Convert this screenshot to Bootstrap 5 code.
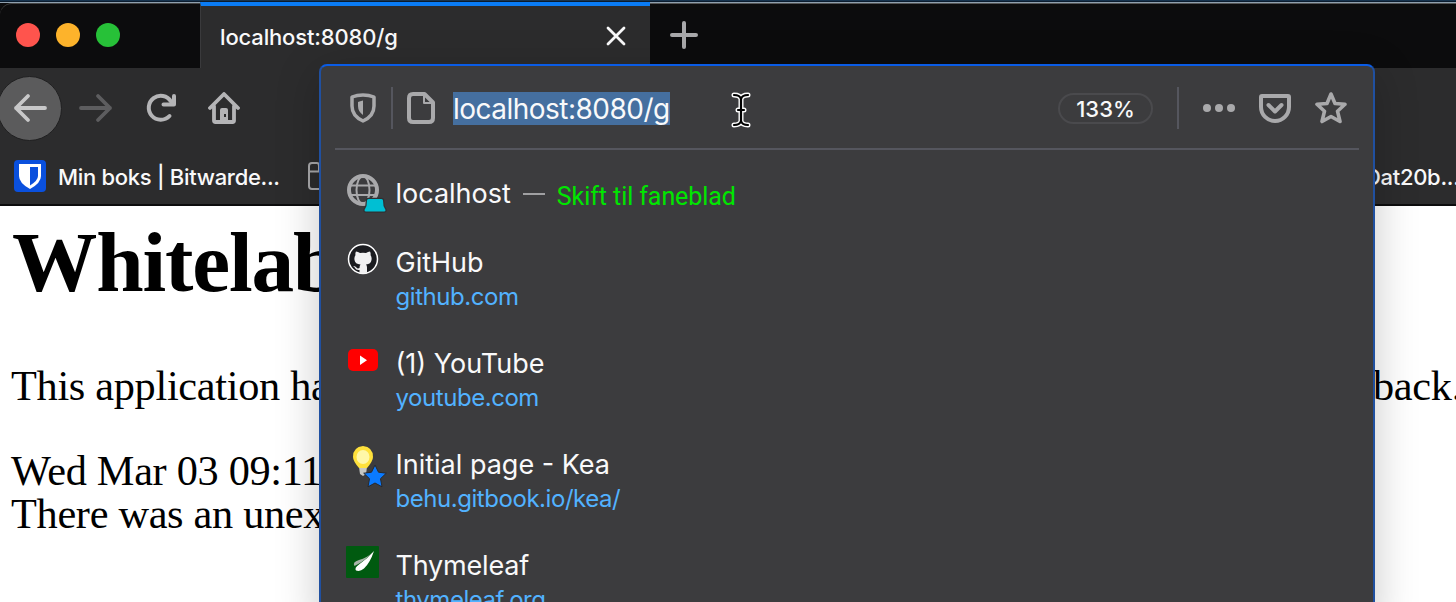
<!DOCTYPE html>
<html lang="da">
<head>
<meta charset="utf-8">
<meta name="viewport" content="width=device-width, initial-scale=1">
<title>localhost:8080/g</title>
<link href="https://cdn.jsdelivr.net/npm/bootstrap@5.3.0/dist/css/bootstrap.min.css" rel="stylesheet">
<style>
body{height:602px;font-family:Inter,"Liberation Sans",sans-serif;background:#fff;color:#f9f9fa}
svg{display:block;flex:none}
.window-edge{height:3px;background:linear-gradient(#17344f 0 1px,#0b1c2e 1px 2px,#8fa0ae 2px)}
.tabstrip{height:65px;background:#0c0c0d}
.lights{width:200px;padding-left:16px;padding-top:19px;gap:16px;border-top:1px solid #444;border-top-left-radius:12px}
.light{width:24px;height:24px;border-radius:50%}
.light.red{background:#ff544d}.light.amber{background:#fdb32b}.light.green{background:#27c138}
.tab{width:450px;margin-top:-1px;background:#2c2c2d;border-top:4px solid #0a7cf5;border-left:1px solid #3a3a3c;font-size:22px;font-weight:500;padding:0 23px 0 19px}
.tab span{letter-spacing:-.15px;line-height:62px}
.newtab{flex:1;border-top:1px solid #555;padding:17px 0 0 20px}
.toolbar{height:80px;background:#2c2c2d;gap:31px}
.backbtn{width:65px;height:65px;margin-left:-3px;border-radius:50%;background:#5b5b5c;border:1px solid #202021}
.bookmarks{height:58px;background:#2c2c2d;border-bottom:2px solid #0c0c0d;font-size:22px;font-weight:500;padding-left:14px}
.bmk{flex:none;letter-spacing:-.3px;white-space:nowrap;padding-top:2px}
.page{color:#000;font-family:"Liberation Serif",serif;font-size:42.3px;line-height:43px;padding:0 0 0 11px;white-space:nowrap;letter-spacing:-.3px}
.page h1{font-size:85.33px;line-height:96px;font-weight:700;margin:8px 0 0;letter-spacing:-1.15px;padding-left:1px}
.page p{margin:0}
.leftpart{width:1362px;flex:none}
.urlpop{left:319px;top:64px;width:1056px;height:560px;background:#3c3c3e;border:2px solid #0a58dc;border-color:#0a5ce6 #2050a0 #2050a0;border-radius:8px;box-shadow:0 10px 44px rgba(0,0,0,.22)}
.field{height:84px;margin:0 14px;border-bottom:2px solid #55565e;padding-left:15px;padding-right:12px;padding-top:2px}
.vr1{width:2px;height:42px;background:#55565e}
.url{font-size:28px;line-height:33px;background:#456f9f;letter-spacing:-.52px;white-space:nowrap}
.url span{position:relative;top:1px}
.zoomlvl{width:95px;height:31px;border:2px solid #4a4a4d;border-radius:16px;font-size:22px;font-weight:500;line-height:29px;text-align:center}
.result{height:101px;padding:25px 0 0 26px;gap:17px}
.result.one{height:69px;padding-top:24px}
.ico{width:32px;height:32px;position:relative}
.ico .over{position:absolute;left:16px;top:18px}
.ttl{font-size:27px;line-height:34px;white-space:nowrap;padding-top:2px;margin-left:-.5px}
.one .ttl{padding-top:3px}
.sub{font-size:24px;line-height:34px;color:#52b2ff;white-space:nowrap;letter-spacing:-.45px;margin-left:-.5px}
.switch{color:#00e600;font-family:Roboto,sans-serif;font-size:25px;line-height:34px;letter-spacing:-.08px;padding-top:3px}
</style>
</head>
<body class="overflow-hidden position-relative">
<div class="window-edge"></div>
<header>
 <div class="tabstrip d-flex">
  <div class="lights d-flex"><i class="light red"></i><i class="light amber"></i><i class="light green"></i></div>
  <div class="tab d-flex align-items-center justify-content-between"><span>localhost:8080/g</span>
   <svg style="margin-bottom:2px" width="22" height="22" viewBox="0 0 22 22" stroke="#f9f9fa" stroke-width="2.8" stroke-linecap="round"><path d="M3 3L19 19M19 3L3 19"/></svg></div>
  <div class="newtab"><svg width="28" height="28" viewBox="0 0 28 28" stroke="#a9a9ab" stroke-width="4" stroke-linecap="round"><path d="M14 2V26M2 14H26"/></svg></div>
 </div>
 <nav class="toolbar d-flex align-items-center">
  <div class="backbtn d-flex align-items-center justify-content-center"><svg width="34" height="30" viewBox="0 0 34 30" fill="none" stroke="#c8c8c9" stroke-width="3.800" stroke-linecap="round" stroke-linejoin="round"><path d="M32 15H3M15 3L3 15L15 27"/></svg></div>
  <svg style="margin-left:-14px" width="34" height="30" viewBox="0 0 34 30" fill="none" stroke="#5d5d5f" stroke-width="3.800" stroke-linecap="round" stroke-linejoin="round"><path d="M2 15H31M19 3L31 15L19 27"/></svg>
  <svg style="margin-left:1px" width="32" height="32" viewBox="0 0 32 32" fill="none" stroke="#b4b4b6" stroke-width="4" stroke-linecap="round" stroke-linejoin="round"><path d="M24.500 24A12 12 0 1 1 26 9.500"/><path d="M29 4V12.500H18.500"/></svg>
  <svg width="32" height="32" viewBox="0 0 32 32" fill="none" stroke="#b4b4b6" stroke-width="3.800" stroke-linecap="round" stroke-linejoin="round"><path d="M2 16L16 2L30 16M6 14V28.500Q6 30 7.500 30H24.500Q26 30 26 28.500V14"/><path fill="#b4b4b6" stroke="none" fill-rule="evenodd" d="M12 30V18Q12 16 14 16H18Q20 16 20 18V30ZM16 22V25H18V22Z"/></svg>
 </nav>
 <div class="bookmarks d-flex align-items-center">
  <svg width="32" height="32" viewBox="0 0 32 32"><rect width="32" height="32" rx="4" fill="#0a50dd"/><path fill="#fff" d="M5 4H27V16Q27 23 16 29Q5 23 5 16Z"/><path fill="#0a50dd" d="M16 7H24V16Q24 20.500 16 25.500Z"/></svg>
  <span class="bmk" style="margin-left:12px;width:221px">Min boks | Bitwarde...</span>
  <svg style="margin-left:29px" width="32" height="28" viewBox="0 0 32 28" fill="none" stroke="#a8a8aa" stroke-width="2"><path d="M1 9.500H31M1 4Q1 1 4 1H9Q11 1 11 4V9M1 4V24Q1 27 4 27H30V9"/></svg>
  <span class="bmk" style="margin-left:1025px">Dat20b...</span>
 </div>
</header>
<main class="page">
 <h1>Whitelab</h1>
 <p class="d-flex" style="margin-top:54px"><span class="leftpart">This application ha</span><span>back.</span></p>
 <p style="margin-top:42px">Wed Mar 03 09:11</p>
 <p>There was an unex</p>
</main>
<section class="urlpop position-absolute">
 <div class="field d-flex align-items-center">
  <svg width="26" height="30" viewBox="0 0 26 30"><path fill="none" stroke="#a9a9ab" stroke-width="3.500" stroke-linejoin="round" d="M13 2Q19 2 24 4V13Q24 23 13 28Q2 23 2 13V4Q7 2 13 2Z"/><path fill="#a9a9ab" d="M13 7.500V22Q8 18.500 8 13V9Q10 8 13 7.500Z"/></svg>
  <div class="vr1" style="margin-left:15px"></div>
  <svg style="margin-left:14px" width="28" height="32" viewBox="0 0 28 32" fill="none" stroke="#a9a9ab" stroke-width="4" stroke-linejoin="round"><path d="M6 2H17.500L26 10.500V26Q26 30 22 30H6Q2 30 2 26V6Q2 2 6 2Z"/><path stroke-width="2" d="M17 2V11H26"/></svg>
  <span class="url" style="margin-left:18px"><span>localhost:8080/g</span></span>
  <svg style="margin-left:61px;margin-top:3px" width="20" height="36" viewBox="0 0 20 36" fill="none" stroke-linecap="round"><path stroke="#fff" stroke-width="5" d="M3 3Q9 3 10 7Q11 3 17 3M10 7V29M3 33Q9 33 10 29Q11 33 17 33M7 18H13"/><path stroke="#000" stroke-width="2.200" d="M3 3Q9 3 10 7Q11 3 17 3M10 7V29M3 33Q9 33 10 29Q11 33 17 33M7 18H13"/></svg>
  <div class="zoomlvl ms-auto">133%</div>
  <div class="vr1" style="margin-left:24px"></div>
  <svg style="margin-left:24px" width="32" height="8" viewBox="0 0 32 8" fill="#a9a9ab"><circle cx="4" cy="4" r="4"/><circle cx="16" cy="4" r="4"/><circle cx="28" cy="4" r="4"/></svg>
  <svg style="margin-left:24px" width="32" height="29" viewBox="0 0 32 29" fill="none" stroke="#a9a9ab" stroke-width="4" stroke-linecap="round" stroke-linejoin="round"><path d="M3 2H29Q30 2 30 3V13A14 14 0 0 1 2 13V3Q2 2 3 2Z"/><path d="M9.500 11L16 17.500L22.500 11"/></svg>
  <svg style="margin-left:24px" width="32" height="32" viewBox="0 0 32 32" fill="none" stroke="#a9a9ab" stroke-width="3.600" stroke-linejoin="round"><path d="M16 2L20 11.500L30 12.300L22.500 19.200L25 29.500L16 24.500L7 29.500L9.500 19.200L2 12.300L12 11.500Z"/></svg>
 </div>
 <div class="result one d-flex">
  <div class="ico"><svg width="32" height="32" viewBox="0 0 32 32" fill="none" stroke="#a9a9ab" stroke-width="2"><circle cx="16" cy="16" r="14" stroke-width="4"/><ellipse cx="16" cy="16" rx="6.500" ry="14"/><path d="M3 11.500H29M3 21H29"/></svg>
   <svg class="over" width="24" height="22" viewBox="0 0 24 22"><path stroke="#303033" stroke-width="2.500" stroke-linejoin="round" fill="#00bfd3" d="M5.500 7Q4 7 4 8.500L3.500 14L1.500 18Q1.500 19.500 3 19.500H21Q22.500 19.500 22.500 18L20.500 14L20 8.500Q20 7 18.500 7Z"/><path fill="#00bfd3" d="M5.500 7Q4 7 4 8.500L3.500 14L1.500 18Q1.500 19.500 3 19.500H21Q22.500 19.500 22.500 18L20.500 14L20 8.500Q20 7 18.500 7Z"/></svg></div>
  <div class="ttl d-flex"><span>localhost</span><svg style="margin:16px 12px 0 12px" width="22" height="2"><rect width="22" height="2" fill="#a0a0a2"/></svg><span class="switch">Skift til faneblad</span></div>
 </div>
 <div class="result d-flex">
  <div class="ico"><svg style="margin-top:-1px" width="32" height="32" viewBox="0 0 32 32"><circle cx="16" cy="16" r="14.500" fill="#1b1c20" stroke="#fff" stroke-width="1.500"/><path fill="#f1f1f2" d="M9 8.500Q11 8.500 13 10Q16 9.400 19 10Q21 8.500 23 8.500Q24 10.500 23.500 12Q25 14 24.500 17Q24 21 19 21.500Q20 22.500 20 24.500V30.500H12.500V27Q9 27.500 8 25Q7.200 23.500 6 23Q8 22.500 9.500 24.500Q10.500 26 12.500 25Q12.500 22.500 13.500 21.500Q8 21 7.500 17Q7 14 8.500 12Q8 10.500 9 8.500Z"/></svg></div>
  <div><div class="ttl">GitHub</div><div class="sub">github.com</div></div>
 </div>
 <div class="result d-flex">
  <div class="ico"><svg style="margin-top:2px" width="32" height="32" viewBox="0 0 32 32"><rect x="1" y="2" width="30" height="22" rx="5" fill="#f00"/><path fill="#fff" d="M13 8.500V18L20 13.200Z"/></svg></div>
  <div><div class="ttl">(1) YouTube</div><div class="sub">youtube.com</div></div>
 </div>
 <div class="result d-flex">
  <div class="ico"><svg width="32" height="32" viewBox="0 0 32 32"><path fill="#c6c7c3" d="M12 21H20L19 28L16 30L13 28Z"/><path fill="#ffe13c" d="M16 0Q26 1 26 11Q26 15 20 22H12Q6 15 6 11Q6 1 16 0Z"/><ellipse cx="16" cy="11" rx="6.500" ry="7" fill="#fff7a8"/></svg>
   <svg class="over" width="24" height="24" viewBox="0 0 24 24"><path fill="#0a7aff" stroke="#29292b" stroke-width="1" stroke-linejoin="round" d="M12 1L15.500 8.200L23.300 9.200L17.500 14.700L19 22.800L12 19L5 22.800L6.500 14.700L.7 9.200L8.500 8.200Z"/></svg></div>
  <div><div class="ttl">Initial page - Kea</div><div class="sub">behu.gitbook.io/kea/</div></div>
 </div>
 <div class="result d-flex">
  <div class="ico"><svg style="margin:-1px 0 0 -1px" width="33" height="32" viewBox="0 0 33 32"><rect width="33" height="32" rx="1" fill="#005a10"/><path fill="#fff" d="M28 5Q24 17 18 22.500Q14 26 10 24.500Q8 22 13 18.500Q21 13 28 5Z"/><path fill="#a9b5aa" d="M27 6Q19 15 8.500 20Q6 16 13 14Q21 12 27 6Z"/></svg></div>
  <div><div class="ttl" style="letter-spacing:-.2px">Thymeleaf</div><div class="sub">thymeleaf.org</div></div>
 </div>
</section>
<script src="https://cdn.jsdelivr.net/npm/bootstrap@5.3.0/dist/js/bootstrap.bundle.min.js"></script>
</body>
</html>
